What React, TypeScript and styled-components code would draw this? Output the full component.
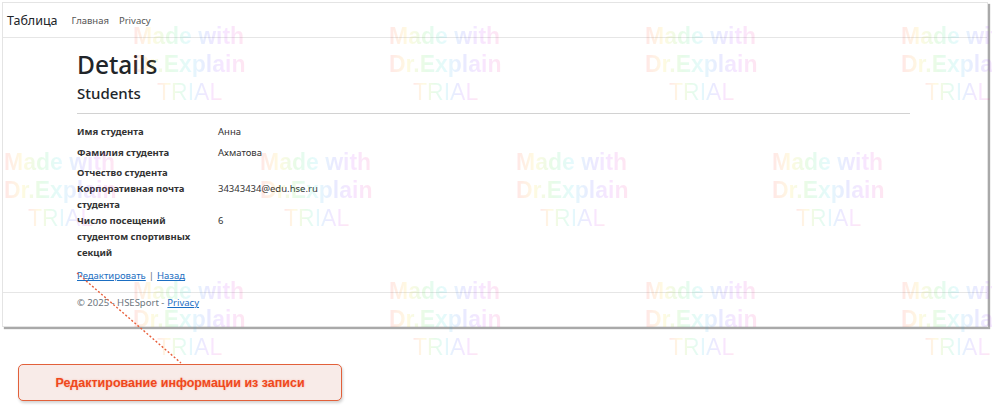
import React from "react";
import styled, { createGlobalStyle } from "styled-components";

const Global = createGlobalStyle`
  html, body { margin: 0; padding: 0; background: #fff; }
  body { font-family: "Noto Sans", "Open Sans", sans-serif; }
`;

const Stage = styled.div`
  position: relative;
  width: 992px;
  height: 406px;
  overflow: hidden;
  background: #fff;
  padding: 2px 0 0 2px;
  box-sizing: border-box;
`;

const Frame = styled.div`
  width: 986px;
  height: 325px;
  box-sizing: border-box;
  border: 1px solid #e4e4e4;
  box-shadow: 2px 2px 1px #a9a9a9;
  background: #fff;
  display: flex;
  flex-direction: column;
  color: #212529;
`;

const NavBar = styled.div`
  height: 35px;
  box-sizing: border-box;
  border-bottom: 1px solid #e6e6e6;
  display: flex;
  align-items: center;
  padding-left: 4px;
  gap: 14px;
`;

const Brand = styled.span`
  font-size: 12.5px;
  color: #212529;
`;

const NavLinks = styled.div`
  display: flex;
  gap: 10px;
  font-size: 9.5px;
  color: #555;
  padding-top: 1px;
`;

const Main = styled.div`
  padding: 12px 0 0 74px;
  flex: 1;
  display: flex;
  flex-direction: column;
`;

const Title = styled.h1`
  margin: 0;
  font-size: 24.5px;
  font-weight: 500;
  line-height: 30px;
  color: #212529;
`;

const Subtitle = styled.h4`
  margin: 3px 0 0;
  font-size: 15px;
  font-weight: 500;
  line-height: 20px;
`;

const Rule = styled.hr`
  width: 833px;
  margin: 10px 0 10px;
  border: 0;
  border-top: 1px solid #d2d2d2;
`;

const List = styled.dl`
  margin: 0;
  display: flex;
  flex-direction: column;
  font-size: 9.5px;
  line-height: 16px;
`;

const Row = styled.div<{ $gap: number }>`
  display: grid;
  grid-template-columns: 141px 1fr;
  margin-bottom: ${(p) => p.$gap}px;
`;

const Term = styled.dt`
  font-weight: 700;
  width: 124px;
  color: #333;
`;

const Desc = styled.dd`
  margin: 0;
  color: #333;
`;

const Actions = styled.div`
  margin-top: 7px;
  font-size: 9.5px;
  line-height: 16px;
  color: #6c757d;
  display: flex;
  gap: 3px;
`;

const Link = styled.a`
  color: #1b6ec2;
  text-decoration: underline;
`;

const Footer = styled.div`
  border-top: 1px solid #e6e6e6;
  height: 34px;
  box-sizing: border-box;
  padding: 2px 0 0 74px;
  font-size: 9.5px;
  line-height: 16px;
  color: #6c757d;
  display: flex;
  align-items: flex-start;
  gap: 3px;
`;

const Callout = styled.div`
  position: absolute;
  left: 18px;
  top: 364px;
  width: 324px;
  height: 37px;
  box-sizing: border-box;
  border: 1.5px solid #e2603a;
  border-radius: 5px;
  background: #f8ebe8;
  box-shadow: 1px 2px 3px rgba(0, 0, 0, 0.18);
  display: flex;
  align-items: center;
  justify-content: center;
  font-family: "Liberation Sans", Arial, sans-serif;
  font-weight: 700;
  font-size: 12.5px;
  color: #f0481c;
  text-shadow: 0 0 2px rgba(239, 79, 34, 0.35);
`;

const Pointer = styled.svg`
  position: absolute;
  left: 0;
  top: 0;
  pointer-events: none;
`;

const Mark = styled.div`
  position: absolute;
  width: 124px;
  display: flex;
  flex-direction: column;
  align-items: flex-start;
  font-family: "Liberation Sans", Arial, sans-serif;
  font-weight: 700;
  font-size: 23px;
  line-height: 28px;
  opacity: 0.11;
  pointer-events: none;
`;

const MarkLine = styled.span<{ $w?: string; $indent?: number }>`
  font-weight: ${(p) => p.$w || "700"};
  margin-left: ${(p) => p.$indent || 0}px;
  background: linear-gradient(90deg, #ff2a2a, #ffd600, #2adf3a, #1ad6e6, #3a4cff, #c32aff, #ff2a8a);
  -webkit-background-clip: text;
  background-clip: text;
  color: transparent;
  white-space: nowrap;
`;

const marks: [number, number][] = [];
[
  [133, 22],
  [4, 148],
  [133, 277],
].forEach(([x0, y]) => {
  for (let x = x0; x < 992; x += 256) marks.push([x, y]);
});

export default function App() {
  return (
    <Stage>
      <Global />
      <Frame>
        <NavBar>
          <Brand>Таблица</Brand>
          <NavLinks>
            <span>Главная</span>
            <span>Privacy</span>
          </NavLinks>
        </NavBar>
        <Main>
          <Title>Details</Title>
          <Subtitle>Students</Subtitle>
          <Rule />
          <List>
            <Row $gap={5}>
              <Term>Имя студента</Term>
              <Desc>Анна</Desc>
            </Row>
            <Row $gap={4}>
              <Term>Фамилия студента</Term>
              <Desc>Ахматова</Desc>
            </Row>
            <Row $gap={0}>
              <Term>Отчество студента</Term>
              <Desc></Desc>
            </Row>
            <Row $gap={0}>
              <Term>Корпоративная почта студента</Term>
              <Desc>34343434@edu.hse.ru</Desc>
            </Row>
            <Row $gap={0}>
              <Term>Число посещений студентом спортивных секций</Term>
              <Desc>6</Desc>
            </Row>
          </List>
          <Actions>
            <Link>Редактировать</Link>
            <span>|</span>
            <Link>Назад</Link>
          </Actions>
        </Main>
        <Footer>
          <span>© 2025 - HSESport -</span>
          <Link>Privacy</Link>
        </Footer>
      </Frame>
      {marks.map(([x, y], i) => (
        <Mark key={i} style={{ left: x, top: y }}>
          <MarkLine>Made with</MarkLine>
          <MarkLine>Dr.Explain</MarkLine>
          <MarkLine $w="400" $indent={24}>TRIAL</MarkLine>
        </Mark>
      ))}
      <Pointer width="992" height="406">
        <line x1="77" y1="273" x2="181" y2="363" stroke="#e8603c" strokeWidth="1.4" strokeDasharray="2 2" />
      </Pointer>
      <Callout>Редактирование информации из записи</Callout>
    </Stage>
  );
}
